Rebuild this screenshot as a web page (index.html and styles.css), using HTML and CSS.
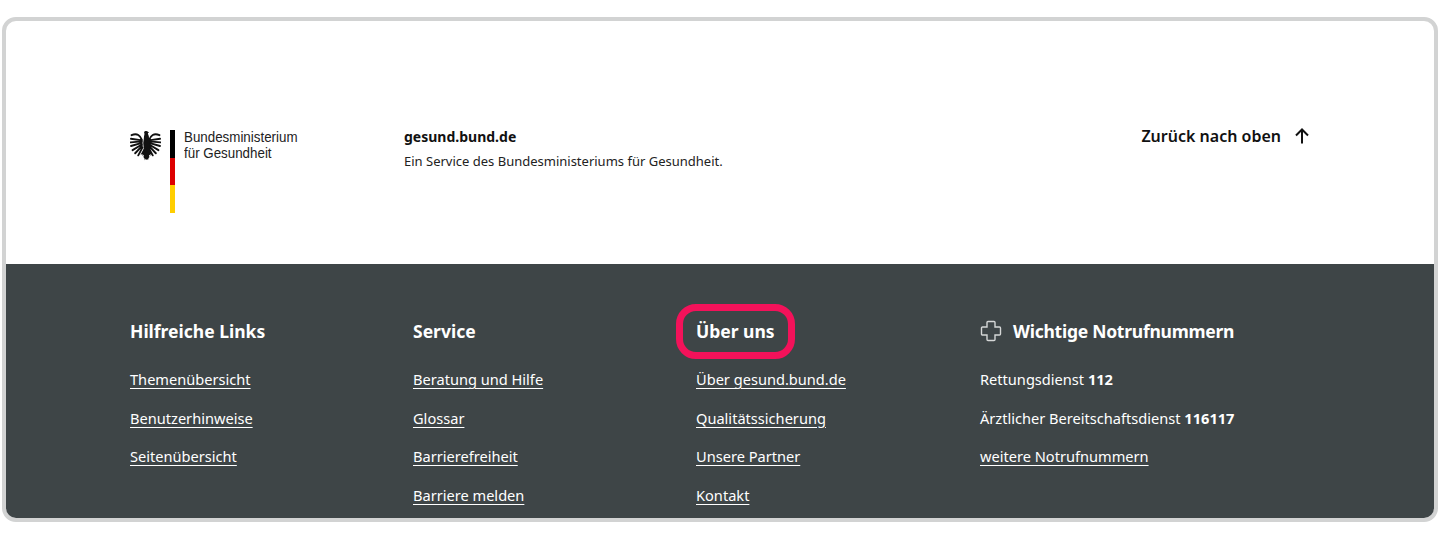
FILE: index.html
```html
<!DOCTYPE html>
<html lang="de">
<head>
<meta charset="utf-8">
<title>gesund.bund.de Footer</title>
<link rel="stylesheet" href="styles.css">
</head>
<body>
<div class="card">
  <section class="top">
    <div class="logo">
      <svg class="eagle" viewBox="0 0 30 30" aria-hidden="true">
        <path class="wing" d="M11.500 9.500C10 5.500 7 2.500 1.500 5M11.500 10 .9 8.500M11.500 11 .5 12M11.500 12.500 1 15.500M11.500 14 2.500 19.500M11.500 15.500 5 22.500M12 17 8 24.500"/>
        <path class="wing" d="M18.500 9.500C20 5.500 23 2.500 28.500 5M18.500 10 29.100 8.500M18.500 11 29.500 12M18.500 12.500 29 15.500M18.500 14 27.500 19.500M18.500 15.500 25 22.500M18 17 22 24.500"/>
        <path class="solid" d="M13.400 2.200c.9-1.500 3-1.700 4-.6l1.200.9-1.300.4c.2 1 .3 2 .9 3l.3 3.100.5 3.500-.5 5.500.8 1.700 2.300 4.300-2-.8.500 1.800-1.500-1 -.2 1.800 1-.1-1.400 1.500-.6 2-.9-1.400-.6 1.400-.6-1.400-.9 1.400-.6-2-1.400-1.500 1 .1-.2-1.800-1.500 1 .5-1.800-2 .8 2.300-4.300.8-1.700-.5-5.500.5-3.500.3-3.100c.4-1 .5-2 .3-3.300Z"/>
      </svg>
      <div class="flag"><span class="black"></span><span class="red"></span><span class="gold"></span></div>
      <div class="ministry">Bundesministerium<br>für Gesundheit</div>
    </div>
    <div class="service">
      <strong>gesund.bund.de</strong>
      <p>Ein Service des Bundesministeriums für Gesundheit.</p>
    </div>
    <a class="back" href="#">Zurück nach oben
      <svg viewBox="0 0 18 18" aria-hidden="true"><path d="M9 16.500V2.500M3 8.500l6-6 6 6"/></svg>
    </a>
  </section>
  <footer class="bottom">
    <div class="col">
      <h2>Hilfreiche Links</h2>
      <a href="#">Themenübersicht</a>
      <a href="#">Benutzerhinweise</a>
      <a href="#">Seitenübersicht</a>
    </div>
    <div class="col">
      <h2>Service</h2>
      <a href="#">Beratung und Hilfe</a>
      <a href="#">Glossar</a>
      <a href="#">Barrierefreiheit</a>
      <a href="#">Barriere melden</a>
    </div>
    <div class="col">
      <h2 class="marked">Über uns<span class="ring"></span></h2>
      <a href="#">Über gesund.bund.de</a>
      <a href="#">Qualitätssicherung</a>
      <a href="#">Unsere Partner</a>
      <a href="#">Kontakt</a>
    </div>
    <div class="col">
      <h2 class="icon-head">
        <svg viewBox="0 0 22 22" aria-hidden="true"><path d="M8 1.500h6a1 1 0 0 1 1 1V7h4.500a1 1 0 0 1 1 1v6a1 1 0 0 1-1 1H15v4.500a1 1 0 0 1-1 1H8a1 1 0 0 1-1-1V15H2.500a1 1 0 0 1-1-1V8a1 1 0 0 1 1-1H7V2.500a1 1 0 0 1 1-1Z"/></svg>
        <span class="tight">Wichtige Notrufnummern</span>
      </h2>
      <p>Rettungsdienst <b>112</b></p>
      <p>Ärztlicher Bereitschaftsdienst <b>116117</b></p>
      <a href="#">weitere Notrufnummern</a>
    </div>
  </footer>
</div>
</body>
</html>
```
FILE: styles.css
```css
* { box-sizing: border-box; }
html, body { margin: 0; background: #fff; }
body {
  height: 538px;
  padding: 17px 2px 0;
  overflow: hidden;
  font-family: "Noto Sans", sans-serif;
  font-size: 14px;
  color: #111;
}
.card {
  height: 505px;
  border: 4px solid #d2d3d3;
  border-radius: 14px;
  overflow: hidden;
  display: flex;
  flex-direction: column;
}
.top {
  height: 243px;
  flex: none;
  padding: 103px 124px 0;
  display: flex;
  align-items: flex-start;
}
.logo { width: 274px; flex: none; display: flex; align-items: flex-start; padding-top: 6px; }
.eagle { width: 31px; height: 31px; margin-top: 0; flex: none; }
.eagle .solid { fill: #111; }
.eagle .wing { fill: none; stroke: #111; stroke-width: 1.800; stroke-linecap: round; }
.flag { width: 5px; height: 83px; margin: 0 0 0 9px; flex: none; display: flex; flex-direction: column; }
.flag span { flex: 1; }
.black { background: #000; }
.red { background: #dd0000; }
.gold { background: #ffce00; }
.ministry {
  margin: -1px 0 0 9px;
  font-family: "Liberation Sans", sans-serif;
  font-size: 15px;
  line-height: 15.500px;
  color: #222;
  white-space: nowrap;
  transform: scaleX(.89);
  transform-origin: left top;
}
.service { flex: 1; padding-top: 1px; }
.service strong { display: block; font-size: 14px; line-height: 24px; font-weight: 700; color: #111; }
.service p { margin: 0; font-size: 13px; line-height: 24px; color: #222; }
.back {
  display: flex;
  align-items: center;
  gap: 12px;
  margin-top: 1px;
  color: #111;
  font-size: 16px;
  font-weight: 600;
  line-height: 22px;
  text-decoration: none;
}
.back svg { width: 18px; height: 18px; margin-right: -1px; fill: none; stroke: #111; stroke-width: 2; }
.bottom {
  flex: 1;
  background: #3e4547;
  color: #fff;
  padding: 54px 0 0 124px;
  display: grid;
  grid-template-columns: 283px 283px 284px 1fr;
  align-items: start;
}
.col { display: flex; flex-direction: column; align-items: flex-start; }
.col h2 {
  position: relative;
  margin: 0 0 24px;
  font-size: 17.500px;
  line-height: 26px;
  font-weight: 700;
}
.tight { letter-spacing: -.25px; }
.col a, .col p {
  margin: 0 0 15.500px;
  font-size: 14.600px;
  line-height: 23px;
  color: #fff;
}
.col a { text-underline-offset: 3px; }
.col b { font-weight: 700; }
.ring {
  position: absolute;
  left: -20px;
  right: -20px;
  top: -14px;
  bottom: -15px;
  border: 7px solid #f3125a;
  border-radius: 20px;
}
.icon-head { display: flex; align-items: center; gap: 11px; }
.icon-head svg { width: 22px; height: 22px; fill: none; stroke: #d5d7d7; stroke-width: 1.400; }
```
